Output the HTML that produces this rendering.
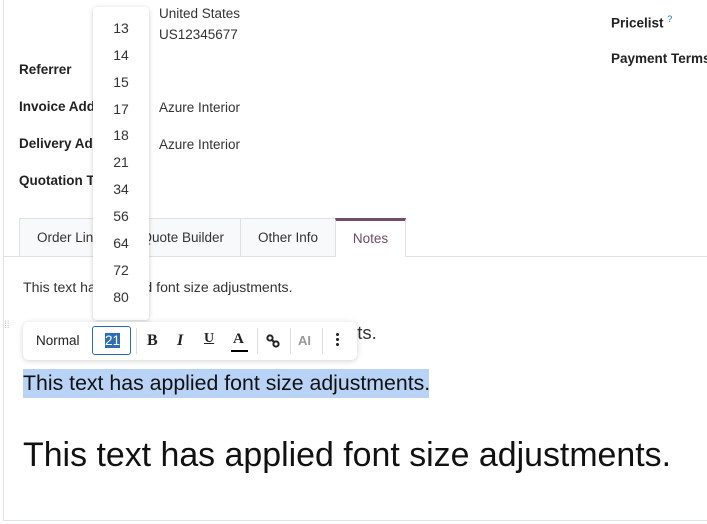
<!DOCTYPE html>
<html><head><meta charset="utf-8"><style>
body{margin:0;width:707px;height:524px;background:#fff;font-family:"Liberation Sans",sans-serif;color:#222;position:relative;overflow:hidden}
.a{position:absolute;white-space:nowrap}
.lbl{font-weight:bold;font-size:13.5px;color:#222}
.v{font-size:13.5px;color:#333}
.tab{position:absolute;top:218px;height:38px;border:1px solid #dee2e6;border-bottom:none;background:#f8f9fa;font-size:13.5px;color:#333;line-height:38px;text-align:center;box-sizing:border-box}
.dd{position:absolute;left:93px;top:7px;width:56px;height:313px;background:#fff;border-radius:4px;box-shadow:0 1px 5px rgba(0,0,0,.2)}
.dd div{position:absolute;left:0;width:56px;text-align:center;font-size:14px;color:#333}
.tb{position:absolute;left:23px;top:322px;width:334px;height:38px;background:#fff;border-radius:6px;box-shadow:0 1px 6px rgba(0,0,0,.18)}
.sep{position:absolute;top:6px;width:1px;height:26px;background:#ddd}
</style></head><body>
<div class="a" style="left:3px;top:0;width:1px;height:521px;background:#dee2e6"></div>
<div class="a" style="left:3px;top:520px;width:704px;height:1px;background:#dee2e6"></div>

<div class="a v" style="left:159px;top:6px">United States</div>
<div class="a v" style="left:159px;top:27px">US12345677</div>
<div class="a lbl" style="left:19px;top:62px">Referrer</div>
<div class="a lbl" style="left:19px;top:99px">Invoice Address</div>
<div class="a v" style="left:159px;top:100px">Azure Interior</div>
<div class="a lbl" style="left:19px;top:136px">Delivery Address</div>
<div class="a v" style="left:159px;top:137px">Azure Interior</div>
<div class="a lbl" style="left:19px;top:173px">Quotation Template</div>
<div class="a lbl" style="left:611px;top:14px">Pricelist <sup style="color:#1a73c8;font-size:9px;font-weight:normal">?</sup></div>
<div class="a lbl" style="left:611px;top:51px">Payment Terms</div>

<div class="a" style="left:3px;top:256px;width:704px;height:1px;background:#dee2e6"></div>
<div class="tab" style="left:19px;width:111px;text-align:left;padding-left:17px">Order Lines</div>
<div class="tab" style="left:129px;width:112px;text-align:right;padding-right:16px">Quote Builder</div>
<div class="tab" style="left:240px;width:96px">Other Info</div>
<div class="tab" style="left:335px;width:71px;background:#fff;border-top:3px solid #714b67;color:#714b67;height:39px;line-height:36px">Notes</div>

<div class="a" style="left:23px;top:279px;font-size:14.1px;color:#333">This text has applied font size adjustments.</div>
<div class="a" style="left:23px;top:322px;font-size:18.5px;color:#333">This text has applied font size adjustments.</div>
<div class="a" style="left:23px;top:369px;height:29px;width:406px;background:#b9d3f7"></div>
<div class="a" style="left:23px;top:371px;font-size:21.3px;color:#111">This text has applied font size adjustments.</div>
<div class="a" style="left:23px;top:436px;font-size:33.9px;color:#111">This text has applied font size adjustments.</div>

<div class="dd">
<div style="top:13px">13</div><div style="top:40px">14</div><div style="top:67px">15</div><div style="top:94px">17</div><div style="top:120px">18</div><div style="top:147px">21</div><div style="top:174px">34</div><div style="top:201px">56</div><div style="top:228px">64</div><div style="top:255px">72</div><div style="top:282px">80</div>
</div>

<div class="a" style="left:4px;top:323px;color:#bbb;font-size:10px;line-height:5px">⁞⁞</div>
<div class="tb">
<div class="a" style="left:13px;top:11px;font-size:13.5px;color:#222">Normal</div>
<div class="a" style="left:69px;top:4px;width:39px;height:29px;border:1px solid #2b6cb0;border-radius:3px;box-sizing:border-box"></div>
<div class="a" style="left:82px;top:11px;font-size:13.5px;background:#2d6db5;color:#fff;line-height:15px">21</div>
<div class="sep" style="left:113px"></div>
<div class="a" style="left:124px;top:10px;font-family:'Liberation Serif',serif;font-weight:bold;font-size:16px">B</div>
<div class="a" style="left:154px;top:10px;font-family:'Liberation Serif',serif;font-style:italic;font-weight:bold;font-size:16px">I</div>
<div class="a" style="left:181px;top:9px;font-family:'Liberation Serif',serif;font-weight:bold;font-size:14px;text-decoration:underline">U</div>
<div class="a" style="left:210px;top:9px;font-family:'Liberation Serif',serif;font-weight:bold;font-size:15px">A</div>
<div class="a" style="left:208px;top:28px;width:17px;height:2px;background:#000"></div>
<div class="sep" style="left:234px"></div>
<svg class="a" style="left:243px;top:12px" width="14" height="14" viewBox="0 0 14 14"><circle cx="4" cy="4" r="2.6" fill="none" stroke="#222" stroke-width="2"/><circle cx="10" cy="10" r="2.6" fill="none" stroke="#222" stroke-width="2"/><path d="M5.5 5.5L8.5 8.5" stroke="#222" stroke-width="2"/></svg>
<div class="sep" style="left:267px"></div>
<div class="a" style="left:275px;top:11px;font-weight:bold;font-size:13px;color:#999">AI</div>
<div class="sep" style="left:299px"></div>
<div class="a" style="left:313px;top:11px;width:3px;height:3px;border-radius:50%;background:#222;box-shadow:0 5px 0 #222,0 10px 0 #222"></div>
</div>
</body></html>
